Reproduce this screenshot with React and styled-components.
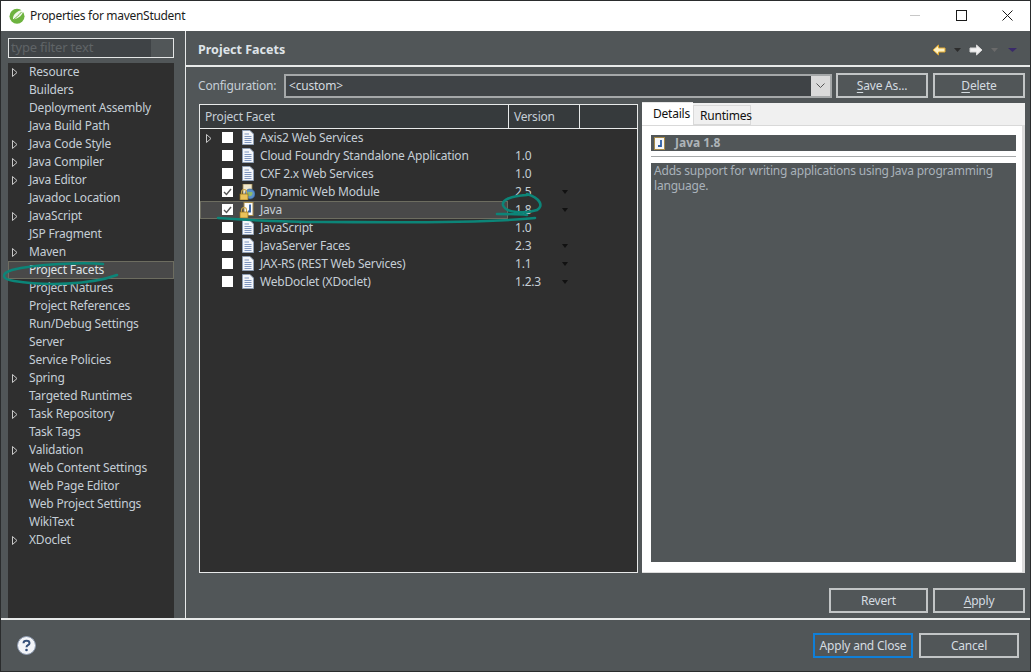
import React from "react";
import styled, { createGlobalStyle } from "styled-components";

const Global = createGlobalStyle`
  html, body { margin: 0; padding: 0; background: #515658; }
  #root { width: 1031px; height: 672px; }
  * { box-sizing: border-box; }
`;

const Win = styled.div`
  position: relative; width: 1031px; height: 672px; display: flex; flex-direction: column;
  background: #515658; color: #c5ced6; overflow: hidden;
  font-family: "Noto Sans", "Open Sans", sans-serif; font-size: 12px; line-height: 18px; letter-spacing: -0.2px;
  border: 1px solid #2a2c2d;
`;
const TitleBar = styled.div`
  height: 30px; flex: none; background: #fff; color: #1c1c1c; display: flex; align-items: center; padding: 0 0 0 8px;
`;
const TitleText = styled.span` flex: 1; letter-spacing: -0.3px; margin-left: 5px; `;
const WinBtn = styled.div`
  width: 46px; height: 30px; display: flex; align-items: center; justify-content: center; padding-bottom: 1px;
`;
const Main = styled.div` flex: 1; display: flex; min-height: 0; `;
const Side = styled.div`
  flex: none; padding: 7px 11px 0 7px; border-right: 1px solid #e8eaea; width: 185px; display: flex; flex-direction: column; gap: 5px;
`;
const Filter = styled.div`
  height: 20px; flex: none; border: 1px solid #e4e6e6; background: #515658; display: flex;
`;
const FilterInner = styled.div`
  width: 142px; background: #3f4346; color: #5f6466; padding: 0 0 0 2px; line-height: 17px; font-size: 13px;
`;
const Tree = styled.div` flex: 1; background: #2f2f2f; `;
const TreeRow = styled.div`
  height: 18px; display: flex; align-items: center; padding-left: 21px; position: relative;
  color: ${p => (p.$sel ? "#dfe4e8" : "#c5ced6")};
  ${p => p.$sel ? "background:#494949; box-shadow: inset 0 0 0 1px #6d6d60;" : ""}
`;
const Arrow = styled.svg` position: absolute; left: ${p => p.$left}px; top: 5px; `;
const Content = styled.div` flex: 1; display: flex; flex-direction: column; min-width: 0; `;
const Head = styled.div`
  height: 36px; flex: none; border-bottom: 2px solid #e8eaea; display: flex; align-items: center; padding: 3px 13px 0 12px;
`;
const HeadTitle = styled.div` flex: 1; font-weight: 700; color: #dfe4e8; font-size: 12.5px; letter-spacing: 0; `;
const ToolIcons = styled.div` display: flex; align-items: center; gap: 8px; `;
const ConfigRow = styled.div`
  display: flex; align-items: center; padding: 1px 5px 0 12px; height: 36px; flex: none;
`;
const ConfigLabel = styled.span` width: 86px; flex: none; `;
const Combo = styled.div`
  width: 548px; height: 24px; flex: none; display: flex; border: 2px solid #a5a8a9; background: #3f4346; color: #d4dadf;
  align-items: center; padding-left: 3px; justify-content: space-between;
`;
const ComboBtn = styled.div`
  width: 19px; height: 20px; background: #dadada; display: flex; align-items: center; justify-content: center;
`;
const Btn = styled.div`
  width: ${p => p.$w}px; height: 25px; flex: none; margin-left: ${p => p.$ml || 0}px;
  border: 2px solid ${p => (p.$focus ? "#0f7fd8" : "#c2c5c6")}; display: flex; align-items: center; justify-content: center; color: #d5dce1;
  background: #515658;
  u { text-underline-offset: 2px; }
`;
const Panes = styled.div` display: flex; padding: 0 5px 0 13px; height: 470px; flex: none; gap: 4px; `;
const Table = styled.div` width: 439px; flex: none; border: 1px solid #e8eaea; background: #2f2f2f; margin-top: 1px; `;
const THead = styled.div` height: 24px; background: #363a3c; border-bottom: 1px solid #e8eaea; display: flex; `;
const TH = styled.div` width: ${p => p.$w}px; border-right: ${p => p.$nob ? "0" : "1px solid #e8eaea"}; padding-left: 5px; line-height: 23px; flex: none; `;
const FRow = styled.div`
  height: 18px; display: flex; align-items: center; position: relative;
  ${p => p.$sel ? "background:#494949; box-shadow: inset 0 0 0 1px #6d6d60; width:308px;" : ""}
`;
const Check = styled.div`
  position: absolute; left: 22px; top: 3px; width: 11px; height: 11px; background: #fff; display: flex; align-items: center; justify-content: center;
`;
const FIcon = styled.div` position: absolute; left: 39px; top: 1px; width: 16px; height: 16px; `;
const FName = styled.span` position: absolute; left: 60px; white-space: nowrap; `;
const FVer = styled.span` position: absolute; left: 315px; white-space: nowrap; `;
const Drop = styled.svg` position: absolute; left: 362px; top: 7px; `;
const Details = styled.div` flex: 1; background: #f0f0f0; display: flex; flex-direction: column; position: relative; `;
const Tabs = styled.div` display: flex; height: 22px; flex: none; align-items: flex-end; `;
const Tab = styled.div`
  color: #111; flex: none; width: ${p => p.$w}px; text-align: center; padding-left: ${p => p.$pl}px;
  ${p => p.$on ? "height:23px; background:#fff; position:relative; z-index:1; line-height:21px; border-top: 1px solid #e6e6e6;" : "height:20px; background:#f0f0f0; border:1px solid #d9d9d9; line-height:20px;"}
`;
const TabBody = styled.div`
  flex: 1; background: #fff; border-top: 1px solid #d9d9d9; border-right: 3px solid #dcdcdc; border-bottom: 1px solid #dcdcdc; padding: 9px 6px 10px 9px; display: flex; flex-direction: column;
`;
const DetHead = styled.div`
  height: 16px; background: #515658; display: flex; align-items: center; padding-left: 3px; gap: 9px; font-weight: 700; color: #aeb4b8; flex: none; letter-spacing: 0;
`;
const DetLine = styled.div` height: 1px; background: #a5a8a9; margin: 5px 0 6px; flex: none; `;
const DetBody = styled.div`
  flex: 1; background: #515658; padding: 0 3px; color: #a9b2ba; line-height: 15px;
`;
const Bottom = styled.div` display: flex; justify-content: flex-end; padding: 15px 5px 0 0; flex: 1; gap: 5px; `;
const Footer = styled.div`
  height: 53px; flex: none; border-top: 2px solid #e8eaea; display: flex; align-items: center; padding: 0 11px 0 16px; gap: 6px;
`;
const Spacer = styled.div` flex: 1; `;
const Overlay = styled.svg` position: absolute; left: -1px; top: -1px; pointer-events: none; `;

const TriOutline = ({ left = 4 }) => (
  <Arrow $left={left} width="6" height="9" viewBox="0 0 6 9"><path d="M.5.5 5 4.5.5 8.5Z" fill="none" stroke="#c8c8c8" /></Arrow>
);
const DocIcon = () => (
  <svg width="12" height="15" viewBox="0 0 12 15" style={{ marginLeft: 3 }}>
    <path d="M.5.5H8L11.5 4V14.5H.5Z" fill="#f4f6fa" stroke="#8f9fb5" />
    <path d="M2.5 4H7M2.5 6.5H9.5M2.5 8.5H9.5M2.5 10.5H9.5M2.5 12.5H9.5" stroke="#7e96c0" />
  </svg>
);
const Lock = () => (
  <g>
    <path d="M2.5 10V8a2.5 2.5 0 0 1 5 0v2" fill="none" stroke="#c9a64a" strokeWidth="1.2" />
    <rect x="1" y="10" width="8" height="6" fill="#e9c25a" stroke="#8e6d1d" strokeWidth=".7" />
  </g>
);
const WebIcon = () => (
  <svg width="16" height="16" viewBox="0 0 16 16">
    <rect x="4" y="0" width="9" height="12" fill="#efe8cf" stroke="#a08a50" strokeWidth=".8" />
    <circle cx="11" cy="10" r="5" fill="#5c8fc9" stroke="#315f95" strokeWidth=".6" />
    <path d="M8.5 8c2-1 3 .5 4 0s1.5 1.5.5 3-3 1.5-4 .5Z" fill="#8fb86a" />
    <Lock />
  </svg>
);
const JavaIcon = () => (
  <svg width="16" height="16" viewBox="0 0 16 16">
    <rect x="5" y=".5" width="9" height="13" fill="#fbfbfb" stroke="#a58a4a" />
    <path d="M11 2.5V9.5H9" fill="none" stroke="#2b5ea8" strokeWidth="1.8" />
    <Lock />
  </svg>
);
const Spring = () => (
  <svg width="16" height="16" viewBox="0 0 16 16">
    <circle cx="8" cy="8.3" r="7.5" fill="#6db33f" />
    <path d="M14.5 1.5C14 7 10 10.5 4 11.5 3.5 7 7 3 14.5 1.5Z" fill="#fff" opacity=".9" />
    <path d="M4 12C7 9.5 9.5 7.5 12.5 4" stroke="#6db33f" fill="none" />
  </svg>
);
const SmallDrop = ({ c = "#2c2c2c", w = 7, ml = 0 }) => (
  <svg width={w} height="4" viewBox="0 0 7 4" preserveAspectRatio="none" style={{ marginTop: 1, marginLeft: ml }}><path d="M0 0H7L3.5 4Z" fill={c} /></svg>
);

const treeItems = [
  ["Resource", 1], ["Builders"], ["Deployment Assembly"], ["Java Build Path"], ["Java Code Style", 1], ["Java Compiler", 1],
  ["Java Editor", 1], ["Javadoc Location"], ["JavaScript", 1], ["JSP Fragment"], ["Maven", 1], ["Project Facets", 0, 1],
  ["Project Natures"], ["Project References"], ["Run/Debug Settings"], ["Server"], ["Service Policies"], ["Spring", 1],
  ["Targeted Runtimes"], ["Task Repository", 1], ["Task Tags"], ["Validation", 1], ["Web Content Settings"], ["Web Page Editor"],
  ["Web Project Settings"], ["WikiText"], ["XDoclet", 1],
];
const facets = [
  { n: "Axis2 Web Services", tri: 1 },
  { n: "Cloud Foundry Standalone Application", v: "1.0" },
  { n: "CXF 2.x Web Services", v: "1.0" },
  { n: "Dynamic Web Module", v: "2.5", d: 1, c: 1, i: "web" },
  { n: "Java", v: "1.8", d: 1, c: 1, i: "java", sel: 1 },
  { n: "JavaScript", v: "1.0" },
  { n: "JavaServer Faces", v: "2.3", d: 1 },
  { n: "JAX-RS (REST Web Services)", v: "1.1", d: 1 },
  { n: "WebDoclet (XDoclet)", v: "1.2.3", d: 1 },
];

export default function App() {
  return (
    <Win>
      <Global />
      <TitleBar>
        <Spring />
        <TitleText>Properties for mavenStudent</TitleText>
        <WinBtn>
          <svg width="11" height="11" viewBox="0 0 11 11"><path d="M0 5.5H10" stroke="#c8c8c8" /></svg>
        </WinBtn>
        <WinBtn>
          <svg width="11" height="11" viewBox="0 0 11 11"><rect x=".5" y=".5" width="10" height="10" fill="none" stroke="#1a1a1a" /></svg>
        </WinBtn>
        <WinBtn>
          <svg width="11" height="11" viewBox="0 0 11 11"><path d="M.5.5 10.5 10.5M10.5.5.5 10.5" stroke="#1a1a1a" /></svg>
        </WinBtn>
      </TitleBar>
      <Main>
        <Side>
          <Filter><FilterInner>type filter text</FilterInner></Filter>
          <Tree>
            {treeItems.map(([t, a, s]) => (
              <TreeRow key={t} $sel={s}>{a ? <TriOutline /> : null}{t}</TreeRow>
            ))}
          </Tree>
        </Side>
        <Content>
          <Head>
            <HeadTitle>Project Facets</HeadTitle>
            <ToolIcons>
              <svg width="14" height="12" viewBox="0 0 14 12"><path d="M1 6 6.5 1V4H13V8H6.5V11Z" fill="#fff3c4" stroke="#e2a92f" /></svg>
              <SmallDrop />
              <svg width="14" height="12" viewBox="0 0 14 12"><path d="M13 6 7.5 1V4H1V8H7.5V11Z" fill="#f2f2f2" stroke="#d8d8d8" /></svg>
              <SmallDrop c="#6a6a6a" />
              <SmallDrop c="#3a2a6a" w={9} ml={2} />
            </ToolIcons>
          </Head>
          <ConfigRow>
            <ConfigLabel>Configuration:</ConfigLabel>
            <Combo>
              &lt;custom&gt;
              <ComboBtn>
                <svg width="9" height="6" viewBox="0 0 9 6"><path d="M.5.5 4.5 4.5 8.5.5" fill="none" stroke="#555" /></svg>
              </ComboBtn>
            </Combo>
            <Btn $w={92} $ml={4}><span><u>S</u>ave As...</span></Btn>
            <Btn $w={92} $ml={5}><span><u>D</u>elete</span></Btn>
          </ConfigRow>
          <Panes>
            <Table>
              <THead>
                <TH $w={309}>Project Facet</TH>
                <TH $w={71}>Version</TH>
                <TH $w={57} $nob />
              </THead>
              {facets.map(f => (
                <FRow key={f.n} $sel={f.sel}>
                  {f.tri ? <TriOutline left={6} /> : null}
                  <Check>
                    {f.c ? <svg width="9" height="8" viewBox="0 0 9 8"><path d="M1 4 3.5 6.5 8 1" fill="none" stroke="#555" strokeWidth="1.4" /></svg> : null}
                  </Check>
                  <FIcon>{f.i === "web" ? <WebIcon /> : f.i === "java" ? <JavaIcon /> : <DocIcon />}</FIcon>
                  <FName>{f.n}</FName>
                  {f.v ? <FVer>{f.v}</FVer> : null}
                  {f.d ? <Drop width="6" height="4" viewBox="0 0 6 4"><path d="M0 0H6L3 4Z" fill="#111" /></Drop> : null}
                </FRow>
              ))}
            </Table>
            <Details>
              <Tabs>
                <Tab $on $w={51} $pl={8}>Details</Tab>
                <Tab $w={58} $pl={6}>Runtimes</Tab>
              </Tabs>
              <TabBody>
                <DetHead>
                  <svg width="12" height="13" viewBox="0 0 12 13"><rect x=".5" y=".5" width="10" height="12" fill="#f7f7f7" stroke="#a58a4a" /><path d="M7 3V9H4" fill="none" stroke="#2b5ea8" strokeWidth="1.8" /></svg>
                  Java 1.8
                </DetHead>
                <DetLine />
                <DetBody>Adds support for writing applications using Java programming language.</DetBody>
              </TabBody>
            </Details>
          </Panes>
          <Bottom>
            <Btn $w={99}>Revert</Btn>
            <Btn $w={92}><span><u>A</u>pply</span></Btn>
          </Bottom>
        </Content>
      </Main>
      <Footer>
        <svg width="19" height="19" viewBox="0 0 19 19">
          <circle cx="9.5" cy="9.5" r="9" fill="#f2f4f8" stroke="#8d9ab0" />
          <path d="M6.5 7.2C6.5 4 12.5 4 12.5 7.2 12.5 9.4 9.5 9 9.5 11.2" fill="none" stroke="#35507a" strokeWidth="2" />
          <circle cx="9.5" cy="14" r="1.3" fill="#35507a" />
        </svg>
        <Spacer />
        <Btn $w={100} $focus>Apply and Close</Btn>
        <Btn $w={100}>Cancel</Btn>
      </Footer>
      <Overlay width="1031" height="672" viewBox="0 0 1031 672" fill="none" stroke="#0c8578" strokeWidth="2.6" strokeLinecap="round">
        <path d="M103 264C85 262 35 264 12 270C0 274 2 279 14 281C45 286 90 285 117 275" />
        <path d="M218 218C260 221 300 222 323 222C370 222 480 224 535 218" />
        <path d="M497 214C510 214 520 214 527 215" />
        <path d="M527 195C510 196 502 200 503 205C505 213 525 214 537 210C544 206 540 198 527 194" />
      </Overlay>
    </Win>
  );
}
